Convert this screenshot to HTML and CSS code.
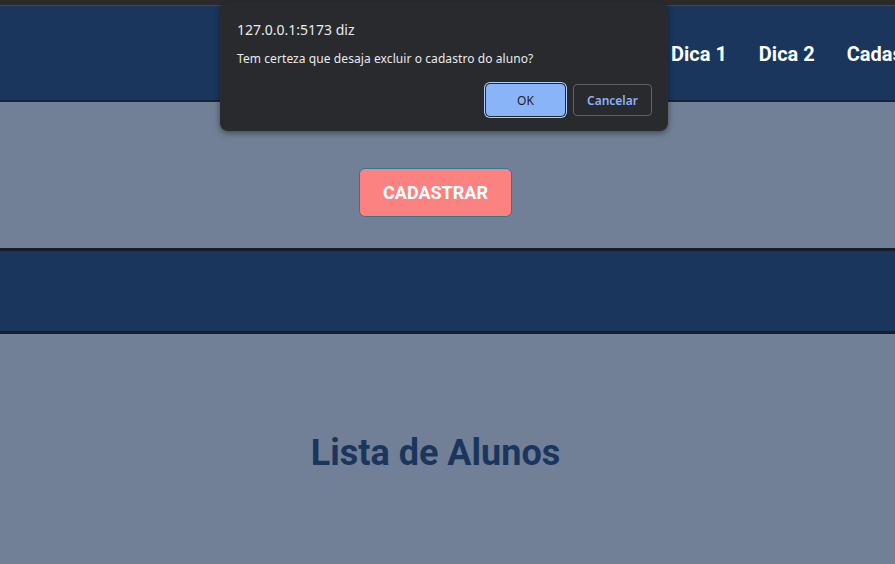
FILE: index.html
```html
<!DOCTYPE html>
<html lang="pt-BR">
<head>
<meta charset="utf-8">
<title>Alunos</title>
<link rel="stylesheet" href="styles.css">
</head>
<body>
<div class="topstrip"></div>
<header class="header">
  <nav class="nav">
    <a class="nav-link">Dica 1</a>
    <a class="nav-link">Dica 2</a>
    <a class="nav-link">Cadastro</a>
  </nav>
</header>
<section class="form-section">
  <button class="btn-cadastrar">CADASTRAR</button>
</section>
<section class="band"></section>
<section class="list-section">
  <h1 class="list-title">Lista de Alunos</h1>
</section>

<div class="dialog" role="dialog">
  <div class="dialog-title">127.0.0.1:5173 diz</div>
  <div class="dialog-msg">Tem certeza que desaja excluir o cadastro do aluno?</div>
  <div class="dialog-actions">
    <button class="dlg-btn dlg-ok">OK</button>
    <button class="dlg-btn dlg-cancel">Cancelar</button>
  </div>
</div>
</body>
</html>
```

FILE: styles.css
```css
html, body {
  margin: 0;
  padding: 0;
}
body {
  width: 895px;
  height: 564px;
  overflow: hidden;
  background: #718096;
  font-family: Roboto, "Liberation Sans", sans-serif;
  position: relative;
}
.topstrip {
  height: 5px;
  background: #2b2b2d;
  border-bottom: 1px solid #3a4a63;
}
.header {
  height: 94px;
  background: #1a365d;
  border-bottom: 2px solid #14243c;
  display: flex;
  align-items: center;
  overflow: hidden;
}
.nav {
  display: flex;
  gap: 32px;
  padding-left: 671px;
  white-space: nowrap;
  margin-top: 2px;
}
.nav-link {
  color: #ffffff;
  font-weight: 700;
  font-size: 20px;
}
.form-section {
  height: 149px;
  display: flex;
  justify-content: center;
  padding-right: 24px;
  box-sizing: border-box;
  padding-top: 66px;
  border-bottom: 3px solid #171c26;
}
.btn-cadastrar {
  width: 153px;
  height: 49px;
  background: #fc8181;
  border: 1px solid #2c7a90;
  border-radius: 6px;
  color: #ffffff;
  font-family: Roboto, "Liberation Sans", sans-serif;
  font-weight: 700;
  font-size: 18px;
}
.band {
  height: 80px;
  background: #1a365d;
  border-bottom: 3px solid #171c26;
}
.list-section {
  display: flex;
  justify-content: center;
  padding-right: 24px;
  padding-top: 98px;
}
.list-title {
  margin: 0;
  color: #1a365d;
  font-size: 36px;
  font-weight: 700;
  line-height: 42px;
}
.dialog {
  position: absolute;
  left: 220px;
  top: 2px;
  width: 448px;
  height: 129px;
  box-sizing: border-box;
  background: #292a2d;
  border-radius: 8px;
  box-shadow: 0 2px 6px rgba(0,0,0,0.45);
  padding: 19px 16px 0 17px;
  font-family: "Noto Sans", "Open Sans", sans-serif;
  color: #e8eaed;
}
.dialog-title {
  font-size: 14px;
  line-height: 18px;
}
.dialog-msg {
  font-size: 12px;
  line-height: 16px;
  margin-top: 12px;
  letter-spacing: 0.08px;
}
.dialog-actions {
  display: flex;
  justify-content: flex-end;
  gap: 8px;
  margin-top: 17px;
}
.dlg-btn {
  width: 79px;
  height: 32px;
  border-radius: 4px;
  font-family: "Noto Sans", "Open Sans", sans-serif;
  font-size: 12px;
  box-sizing: border-box;
}
.dlg-ok {
  background: #8ab4f8;
  color: #202124;
  border: 1px solid #8ab4f8;
  box-shadow: 0 0 0 1px #292a2d, 0 0 0 2px #aecbfa;
}
.dlg-cancel {
  background: #292a2d;
  color: #8ab4f8;
  border: 1px solid #5f6368;
  font-weight: 600;
}
```
